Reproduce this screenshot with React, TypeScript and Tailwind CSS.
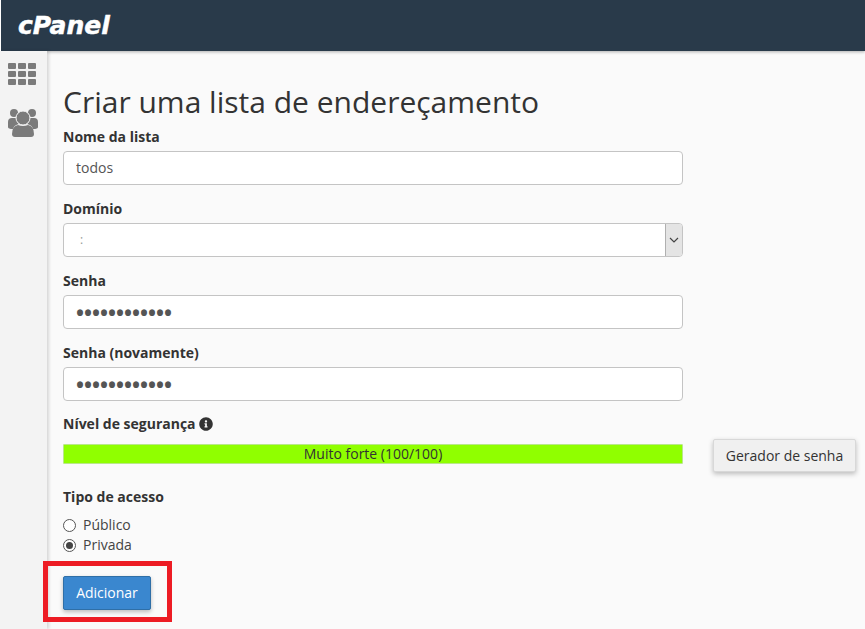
import { FaInfoCircle } from "react-icons/fa";

const inputClass =
  "block h-[34px] w-full rounded-[4px] border border-[#c4c4c4] bg-white px-3 pb-[2px] text-[14px] text-[#555] outline-none";
const passwordClass =
  "block h-[34px] w-full rounded-[4px] border border-[#c4c4c4] bg-white px-3 pt-[1px] text-[21.3px] font-bold text-[#555] outline-none";

function Field({ label, children }: { label: string; children: React.ReactNode }) {
  return (
    <div className="mb-[13px]">
      <label className="mb-[4px] block h-[21px] text-[14px] font-bold leading-[22px] text-[#333]">{label}</label>
      {children}
    </div>
  );
}

function GridIcon() {
  return (
    <svg width="28" height="22" viewBox="0 0 28 22" fill="currentColor">
      {[0, 10, 20].map((x) =>
        [0, 8, 16].map((y) => <rect key={`${x}-${y}`} x={x} y={y} width="8" height="6" rx="1" />)
      )}
    </svg>
  );
}

function UsersIcon() {
  return (
    <svg width="30" height="29" viewBox="0 0 30 29" fill="currentColor">
      <circle cx="6" cy="5" r="4" />
      <circle cx="24" cy="5" r="4" />
      <path d="M0 19v-5q0-4 4-4h4q1 4 3 6q-5 1-6 5q-5 0-5-2z" />
      <path d="M30 19v-5q0-4-4-4h-4q-1 4-3 6q5 1 6 5q5 0 5-2z" />
      <circle cx="15" cy="10" r="7" stroke="#f3f3f3" strokeWidth="1" />
      <path d="M4 26q0-8 6-9q5 2 10 0q6 1 6 9q0 3-3 3h-16q-3 0-3-3z" />
    </svg>
  );
}

export default function App() {
  return (
    <div className="flex h-screen flex-col overflow-hidden bg-[#fafafa] font-['Open_Sans',sans-serif] text-[#333]">
      <header className="flex h-[51px] shrink-0 items-center border-l border-white bg-[#293a4a] pl-[17px] shadow-[0_1px_3px_rgba(0,0,0,0.3)]">
        <span className="font-['DejaVu_Sans',sans-serif] text-[25px] font-bold italic leading-none text-white [-webkit-text-stroke:0.5px_white]">
          cPanel
        </span>
      </header>
      <div className="flex min-h-0 flex-1">
        <aside className="flex w-[47px] shrink-0 flex-col items-start gap-[23px] bg-[#f3f3f3] pl-2 pt-3 text-[#7b7b7b] shadow-[2px_0_3px_rgba(0,0,0,0.14)]">
          <GridIcon />
          <UsersIcon />
        </aside>
        <main className="flex-1 pl-4 pt-[31px]">
          <h1 className="mb-[4px] h-[40px] text-[30px] font-normal leading-[40px] text-[#333]">
            Criar uma lista de endereçamento
          </h1>
          <div className="w-[620px]">
            <Field label="Nome da lista">
              <input className={inputClass} defaultValue="todos" readOnly />
            </Field>
            <Field label="Domínio">
              <div className="flex h-[34px] items-stretch overflow-hidden rounded-[4px] border border-[#c4c4c4] bg-white">
                <span className="flex-1 pl-4 text-[12px] leading-[32px] text-[#999]">:</span>
                <span className="flex w-[17px] items-center justify-center border-l border-[#b0b0b0] bg-[#e4e4e4]">
                  <svg width="10" height="6" viewBox="0 0 10 6" fill="none" stroke="#444" strokeWidth="1.2">
                    <path d="M1 1l4 4 4-4" />
                  </svg>
                </span>
              </div>
            </Field>
            <Field label="Senha">
              <input className={passwordClass} type="password" defaultValue="abcdefghijkl" readOnly />
            </Field>
            <Field label="Senha (novamente)">
              <input className={passwordClass} type="password" defaultValue="abcdefghijkl" readOnly />
            </Field>
            <div className="mb-[10px] flex h-5 items-center gap-[3px] text-[14px] font-bold leading-5 text-[#333]">
              Nível de segurança
              <FaInfoCircle className="h-[14px] w-[14px] text-[#333]" />
            </div>
            <div className="relative h-5 rounded-[1px] border border-[#b9e78a] bg-[#90ff00] text-center text-[14px] leading-[18px] text-[#333]">
              Muito forte (100/100)
              <button className="absolute left-[649px] top-[-6px] h-[33px] w-[143px] rounded-[2px] border border-[#d8d8d8] bg-[#f0f0f0] text-[14px] text-[#333] shadow-[0_2px_5px_rgba(0,0,0,0.25)]">
                Gerador de senha
              </button>
            </div>
            <div className="mt-[23px] h-5 text-[14px] font-bold leading-5 text-[#333]">Tipo de acesso</div>
            <div className="mt-[8px] flex flex-col text-[14px] leading-5 text-[#444]">
              <label className="flex h-5 items-center gap-[7px]">
                <span className="h-[13px] w-[13px] rounded-full border border-[#555] bg-white" />
                Público
              </label>
              <label className="flex h-5 items-center gap-[7px]">
                <span className="flex h-[13px] w-[13px] items-center justify-center rounded-full border border-[#555] bg-white">
                  <span className="h-[7px] w-[7px] rounded-full bg-[#444]" />
                </span>
                Privada
              </label>
            </div>
            <div className="-ml-5 mt-[6px] h-[61px] w-[129px] border-[5px] border-[#ed1c24] pl-[15px] pt-[10px]">
              <button className="block h-[34px] w-[88px] rounded-[2px] border border-[#2f6fa7] bg-[#3a87cf] pb-[2px] text-[14px] text-white shadow-[0_2px_4px_rgba(0,0,0,0.25)]">
                Adicionar
              </button>
            </div>
          </div>
        </main>
      </div>
    </div>
  );
}
